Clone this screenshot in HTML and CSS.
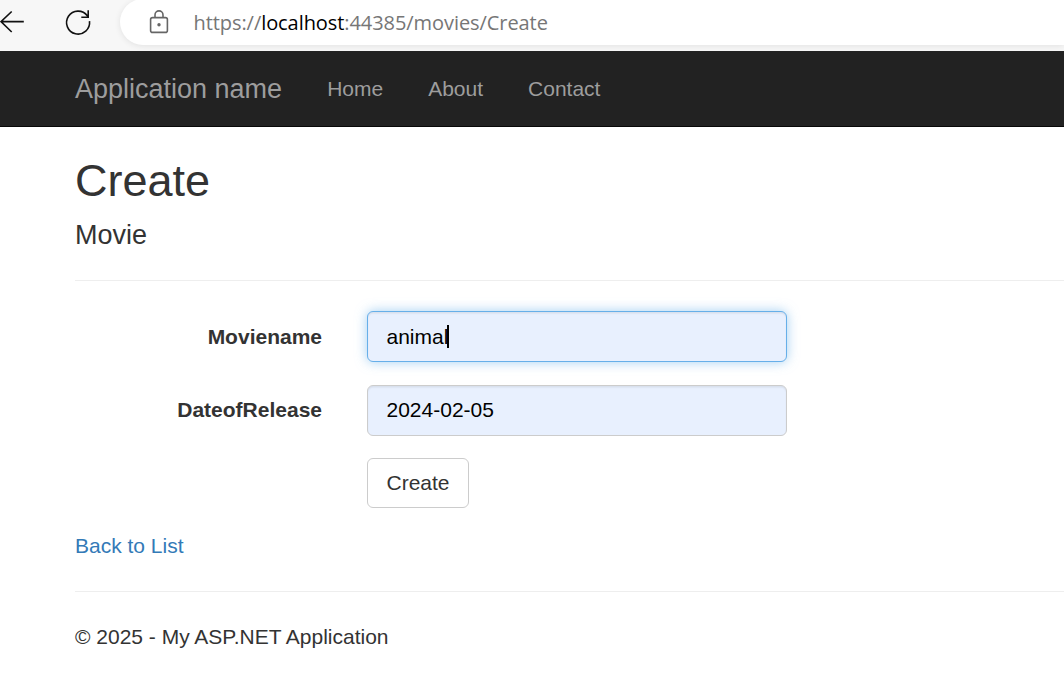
FILE: index.html
```html
<!DOCTYPE html>
<html lang="en">
<head>
<meta charset="utf-8">
<title>Create - My ASP.NET Application</title>
<link rel="stylesheet" href="styles.css">
</head>
<body>
<div class="browser-bar">
  <svg class="back-icon" width="24" height="24" viewBox="0 0 24 24"><path d="M23.8 11.6H.9M11.700 1.500L1 11.600l10.700 10.400"/></svg>
  <svg class="reload-icon" width="26" height="26" viewBox="0 0 26 26"><path d="M24.500 11.200A11.500 11.500 0 1 1 22.300 5.700L23.200 7.200M23.200 .3V7.200H16.300"/></svg>
  <div class="address">
    <svg class="lock-icon" width="20" height="24" viewBox="0 0 20 24"><rect x="1.600" y="7.600" width="16.800" height="14.800" rx="2"/><path d="M6 7.600V4.900a4 4 0 0 1 8 0V7.600"/><circle cx="10" cy="14.700" r="1.700"/></svg>
    <span class="url">https://<span class="host">localhost</span>:44385/movies/Create</span>
  </div>
</div>
<nav class="navbar">
  <a class="brand">Application name</a>
  <a class="nav-link">Home</a>
  <a class="nav-link">About</a>
  <a class="nav-link">Contact</a>
</nav>
<main class="container">
  <h2>Create</h2>
  <h4>Movie</h4>
  <hr>
  <form class="form">
    <label>Moviename</label>
    <div class="control focused">animal<span class="caret"></span></div>
    <label class="date-label">DateofRelease</label>
    <div class="control date">2024-02-05</div>
    <button class="submit" type="button">Create</button>
  </form>
  <a class="back-link">Back to List</a>
  <hr>
  <footer>© 2025 - My ASP.NET Application</footer>
</main>
</body>
</html>
```
FILE: styles.css
```css
* { box-sizing: border-box; }
body {
  margin: 0;
  height: 696px;
  overflow: hidden;
  background: #fff;
  color: #333;
  font: 21px/30px "Liberation Sans", Arial, sans-serif;
}
.browser-bar {
  display: flex;
  height: 51px;
  background: #f7f7f7;
  overflow: hidden;
}
svg { flex: none; fill: none; stroke: #111; stroke-width: 1.6; overflow: visible; }
.back-icon { margin-top: 10px; }
.reload-icon { margin: 10px 0 0 41px; }
.address {
  flex: 1;
  display: flex;
  height: 46px;
  margin: -1px 0 0 29px;
  padding-left: 29px;
  background: #fff;
  border-radius: 23px 0 0 23px;
  box-shadow: 0 1px 6px rgba(0, 0, 0, .09);
}
.lock-icon { margin-top: 11px; stroke: #666; }
.lock-icon circle { fill: #666; stroke: none; }
.url {
  margin: 9px 0 0 24.500px;
  color: #767676;
  font: 20px/30px "Open Sans", "Noto Sans", sans-serif;
  letter-spacing: -.07px;
  white-space: nowrap;
}
.host { color: #000; }
.navbar {
  display: flex;
  align-items: center;
  height: 76px;
  padding-left: 75px;
  background: #222;
  border-bottom: 1px solid #080808;
  color: #9d9d9d;
}
.brand { font-size: 27px; margin-right: 45px; }
.nav-link { margin-right: 45px; }
.container { padding: 29px 0 0 75px; }
h2, h4 { margin: 0; font-weight: 400; line-height: 1.1; }
h2 { font-size: 45px; margin-bottom: 15px; }
h4 { font-size: 27px; }
hr { margin: 30px 0; border: 0; border-top: 1px solid #eee; }
.form {
  display: grid;
  grid-template-columns: 247px 420px;
  grid-template-rows: 51px 51px 50px;
  column-gap: 45px;
  row-gap: 23px;
  margin-bottom: 22px;
}
label { padding-top: 11px; text-align: right; font-weight: 700; }
.date-label { padding-top: 10px; }
.control {
  display: flex;
  align-items: center;
  padding: 0 18.500px;
  border: 1px solid #ccc;
  border-radius: 6px;
  background: #e8f0fe;
  color: #000;
  box-shadow: inset 0 1.5px 1.5px rgba(0, 0, 0, .075);
}
.date { padding-bottom: 2px; }
.focused {
  border-color: #66afe9;
  box-shadow: inset 0 1.5px 1.5px rgba(0, 0, 0, .075), 0 0 12px rgba(102, 175, 233, .6);
}
.caret { width: 2px; height: 23px; margin-left: -1.5px; background: #000; }
.submit {
  grid-column: 2;
  justify-self: start;
  width: 102px;
  margin-top: -1px;
  height: 50px;
  padding: 0;
  border: 1px solid #ccc;
  border-radius: 6px;
  background: #fff;
  color: #333;
  font: inherit;
}
.back-link { display: block; color: #337ab7; }
```
